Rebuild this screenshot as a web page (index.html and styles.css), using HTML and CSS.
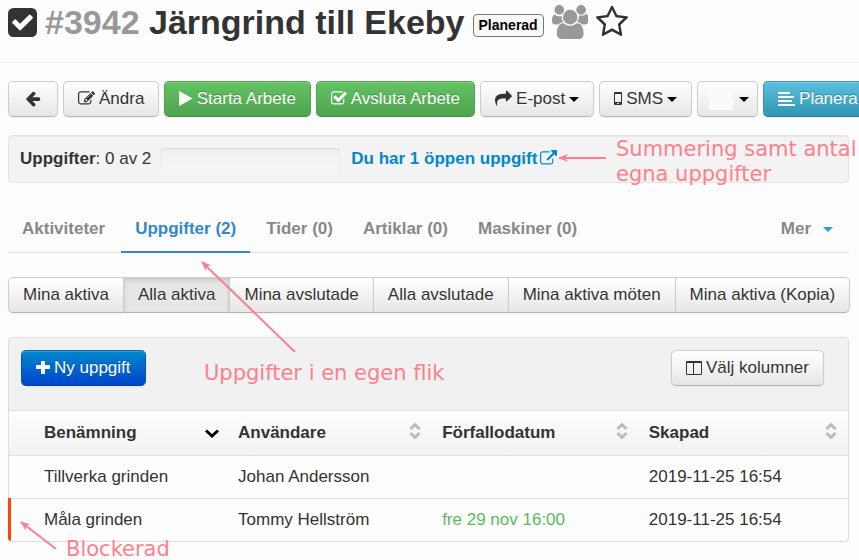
FILE: index.html
```
<!DOCTYPE html>
<html lang="sv">
<head>
    <meta charset="UTF-8">
    <meta name="viewport" content="width=device-width, initial-scale=1.0">
    <title>#3942 Järngrind till Ekeby</title>
    <link rel="stylesheet" href="styles.css">
</head>
<body>
    <header class="page-header">
        <svg class="icon" viewBox="128 128 1536 1536"><path d="M813 1299l614-614q19-19 19-45t-19-45l-102-102q-19-19-45-19t-45 19l-467 467-211-211q-19-19-45-19t-45 19l-102 102q-19 19-19 45t19 45l358 358q19 19 45 19t45-19zm851-883v960q0 119-84.5 203.5t-203.5 84.5h-960q-119 0-203.5-84.5t-84.5-203.5v-960q0-119 84.5-203.5t203.5-84.5h960q119 0 203.5 84.5t84.5 203.5z"/></svg>
        <h1><span class="order-number">#3942</span> Järngrind till Ekeby</h1>
        <span class="label">Planerad</span>
        <svg class="icon icon-users" viewBox="64 0 1920 1792"><path d="M657 896q-162 5-265 128h-134q-82 0-138-40.5t-56-118.5q0-353 124-353 6 0 43.5 21t97.5 42.5 119 21.5q67 0 133-23-5 37-5 66 0 159 93 293zm1071 637q0 120-73 189.5t-194 69.5h-874q-121 0-194-69.5t-73-189.5q0-53 3.5-103.5t14-109 26.5-108.5 43-97.5 62-81 85.5-53.5 111.5-20q10 0 43 21.5t73 48 107 48 135 21.5 135-21.5 107-48 73-48 43-21.5q61 0 111.5 20t85.5 53.5 62 81 43 97.5 26.5 108.5 14 109 3.5 103.5zm-1024-1277q0 106-75 181t-181 75-181-75-75-181 75-181 181-75 181 75 75 181zm704 384q0 159-112.5 271.5t-271.5 112.5-271.5-112.5-112.5-271.5 112.5-271.5 271.5-112.5 271.5 112.5 112.5 271.5zm576 225q0 78-56 118.5t-138 40.5h-134q-103-123-265-128 93-134 93-293 0-29-5-66 66 23 133 23 59 0 119-21.5t97.5-42.5 43.5-21q124 0 124 353zm-128-609q0 106-75 181t-181 75-181-75-75-181 75-181 181-75 181 75 75 181z"/></svg>
        <svg class="icon icon-star" viewBox="64 64 1664 1664"><path d="M1201 1004l306-297-422-62-189-382-189 382-422 62 306 297-73 421 378-199 377 199zm527-357q0 22-26 48l-363 354 86 500q1 7 1 20 0 50-41 50-19 0-40-12l-449-236-449 236q-22 12-40 12-21 0-31.5-14.5t-10.5-35.5q0-6 2-20l86-500-364-354q-25-27-25-48 0-37 56-46l502-73 225-455q19-41 49-41t49 41l225 455 502 73q56 9 56 46z"/></svg>
    </header>

    <main class="content">
        <div class="toolbar">
            <button class="btn btn-back" aria-label="Tillbaka">
                <svg class="icon" viewBox="64 0 1664 1792"><path d="M1664 896v128q0 53-32.5 90.5t-84.5 37.5h-704l293 294q38 36 38 90t-38 90l-75 76q-37 37-90 37-52 0-91-37l-651-652q-37-37-37-90 0-52 37-91l651-650q38-38 91-38 52 0 90 38l75 74q38 38 38 91t-38 91l-293 293h704q52 0 84.5 37.5t32.5 90.5z"/></svg>
            </button>
            <button class="btn">
                <svg class="icon" viewBox="0 0 1792 1792"><path d="M888 1184l116-116-152-152-116 116v56h96v96h56zm440-720q-16-16-33 1l-350 350q-17 17-1 33t33-1l350-350q17-17 1-33zm80 594v190q0 119-84.5 203.5t-203.5 84.5h-832q-119 0-203.5-84.5t-84.5-203.5v-832q0-119 84.5-203.5t203.5-84.5h832q63 0 117 25 15 7 18 23 3 17-9 29l-49 49q-14 14-32 8-23-6-45-6h-832q-66 0-113 47t-47 113v832q0 66 47 113t113 47h832q66 0 113-47t47-113v-126q0-13 9-22l64-64q15-15 35-7t20 29zm-96-738l288 288-672 672h-288v-288zm444 132l-92 92-288-288 92-92q28-28 68-28t68 28l152 152q28 28 28 68t-28 68z"/></svg>
                Ändra
            </button>
            <button class="btn btn-success">
                <svg class="icon" viewBox="192 0 1408 1792"><path d="M1576 927l-1328 738q-23 13-39.5 3t-16.5-36v-1472q0-26 16.5-36t39.5 3l1328 738q23 13 23 31t-23 31z"/></svg>
                Starta Arbete
            </button>
            <button class="btn btn-success">
                <svg class="icon" viewBox="64 0 1664 1792"><path d="M1472 930v318q0 119-84.5 203.5t-203.5 84.5h-832q-119 0-203.5-84.5t-84.5-203.5v-832q0-119 84.5-203.5t203.5-84.5h832q63 0 117 25 15 7 18 23 3 17-9 29l-49 49q-10 10-23 10-3 0-9-2-23-6-45-6h-832q-66 0-113 47t-47 113v832q0 66 47 113t113 47h832q66 0 113-47t47-113v-254q0-13 9-22l64-64q10-10 23-10 6 0 12 3 20 8 20 29zm231-489l-814 814q-24 24-57 24t-57-24l-430-430q-24-24-24-57t24-57l110-110q24-24 57-24t57 24l263 263 647-647q24-24 57-24t57 24l110 110q24 24 24 57t-24 57z"/></svg>
                Avsluta Arbete
            </button>
            <button class="btn" aria-haspopup="menu">
                <svg class="icon" viewBox="0 0 1792 1792"><path d="M1792 640q0 26-19 45l-512 512q-19 19-45 19t-45-19-19-45v-256h-224q-98 0-175.5 6t-154 21.5-133 42.5-105.5 69.5-80 101-48.5 138.5-17.5 181q0 55 5 123 0 6 2.5 23.5t2.5 26.5q0 15-8.5 25t-23.5 10q-16 0-28-17-7-9-13-22t-13.5-30-10.5-24q-127-285-127-451 0-199 53-333 162-403 875-403h224v-256q0-26 19-45t45-19 45 19l512 512q19 19 19 45z"/></svg>
                E-post
                <span class="caret"></span>
            </button>
            <button class="btn" aria-haspopup="menu">
                <svg class="icon" viewBox="0 0 8 17"><path fill-rule="evenodd" d="M1 2h6q1 0 1 1v11q0 1-1 1H1q-1 0-1-1V3q0-1 1-1zm0 2v8h6V4zm2 9v1h2v-1z"/></svg>
                SMS
                <span class="caret"></span>
            </button>
            <button class="btn btn-user" aria-label="Användare" aria-haspopup="menu">
                <span class="avatar"></span>
                <span class="caret"></span>
            </button>
            <button class="btn btn-info">
                <svg class="icon" viewBox="0 0 17 17"><path d="M0 2h12v2H0zM0 6h16v2H0zM0 10h14v2H0zM0 14h17v2H0z"/></svg>
                Planera
            </button>
        </div>

        <section class="summary">
            <label for="task-progress"><strong>Uppgifter</strong>: 0 av 2</label>
            <progress id="task-progress" class="task-progress" value="0" max="2"></progress>
            <a class="open-tasks" href="#uppgifter">Du har 1 öppen uppgift
                <svg class="icon" viewBox="0 0 1792 1792"><path d="M1408 928v320q0 119-84.5 203.5t-203.5 84.5h-832q-119 0-203.5-84.5t-84.5-203.5v-832q0-119 84.5-203.5t203.5-84.5h704q14 0 23 9t9 23v64q0 14-9 23t-23 9h-704q-66 0-113 47t-47 113v832q0 66 47 113t113 47h832q66 0 113-47t47-113v-320q0-14 9-23t23-9h64q14 0 23 9t9 23zm384-864v512q0 26-19 45t-45 19-45-19l-176-176-652 652q-10 10-23 10t-23-10l-114-114q-10-10-10-23t10-23l652-652-176-176q-19-19-19-45t19-45 45-19h512q26 0 45 19t19 45z"/></svg>
            </a>
        </section>

        <nav class="tabs">
            <a href="#aktiviteter">Aktiviteter</a>
            <a href="#uppgifter" class="active">Uppgifter (2)</a>
            <a href="#tider">Tider (0)</a>
            <a href="#artiklar">Artiklar (0)</a>
            <a href="#maskiner">Maskiner (0)</a>
            <a href="#mer" class="more">Mer <span class="caret"></span></a>
        </nav>

        <div class="btn-group">
            <button class="btn">Mina aktiva</button>
            <button class="btn active">Alla aktiva</button>
            <button class="btn">Mina avslutade</button>
            <button class="btn">Alla avslutade</button>
            <button class="btn">Mina aktiva möten</button>
            <button class="btn">Mina aktiva (Kopia)</button>
        </div>

        <section class="panel" id="uppgifter">
            <div class="panel-toolbar">
                <button class="btn btn-primary">
                    <svg class="icon" viewBox="0 0 14 17"><path d="M5 2h4v4h5v4H9v5H5v-5H0V6h5z"/></svg>
                    Ny uppgift
                </button>
                <button class="btn">
                    <svg class="icon" viewBox="0 0 16 17"><path fill-rule="evenodd" d="M1 2h14q1 0 1 1v12q0 1-1 1H1q-1 0-1-1V3q0-1 1-1zm0 2v11h6V4zm7 0v11h7V4z"/></svg>
                    Välj kolumner
                </button>
            </div>
            <table class="task-table">
                <thead>
                    <tr>
                        <th class="col-marker"></th>
                        <th class="col-name"><div class="sort">Benämning <svg class="sort-active" viewBox="0 0 14 9"><path d="M1 1.5l6 5.5 6-5.5"/></svg></div></th>
                        <th class="col-user"><div class="sort">Användare <svg class="sort-icon" viewBox="0 0 12 18"><path d="M1.5 7L6 2.5 10.5 7M1.5 11L6 15.5 10.5 11"/></svg></div></th>
                        <th class="col-due"><div class="sort">Förfallodatum <svg class="sort-icon" viewBox="0 0 12 18"><path d="M1.5 7L6 2.5 10.5 7M1.5 11L6 15.5 10.5 11"/></svg></div></th>
                        <th class="col-created"><div class="sort">Skapad <svg class="sort-icon" viewBox="0 0 12 18"><path d="M1.5 7L6 2.5 10.5 7M1.5 11L6 15.5 10.5 11"/></svg></div></th>
                    </tr>
                </thead>
                <tbody>
                    <tr>
                        <td></td>
                        <td>Tillverka grinden</td>
                        <td>Johan Andersson</td>
                        <td></td>
                        <td>2019-11-25 16:54</td>
                    </tr>
                    <tr class="blocked">
                        <td></td>
                        <td>Måla grinden</td>
                        <td>Tommy Hellström</td>
                        <td class="due">fre 29 nov 16:00</td>
                        <td>2019-11-25 16:54</td>
                    </tr>
                </tbody>
            </table>
        </section>
    </main>

    <!-- Notes drawn on top of the page -->
    <svg class="note-arrows" width="620" height="560">
        <defs>
            <marker id="arrowhead" viewBox="0 0 10 8" refX="9" refY="4" markerWidth="10" markerHeight="8" markerUnits="userSpaceOnUse" orient="auto">
                <path d="M0 0l10 4-10 4 3-4z"/>
            </marker>
        </defs>
        <path d="M606 158H559"/>
        <path d="M295 352L202 262"/>
        <path d="M56 549L21 522"/>
    </svg>
    <p class="note note-summary">Summering samt antal<br>egna uppgifter</p>
    <p class="note note-tab">Uppgifter i en egen flik</p>
    <p class="note note-blocked">Blockerad</p>
</body>
</html>
```
FILE: styles.css
```
* {
    box-sizing: border-box;
}

body {
    position: relative;
    min-height: 100vh;
    margin: 0;
    overflow-x: hidden;
    background-color: #fdfdfd;
    color: #333;
    font-family: "Liberation Sans", Arial, sans-serif;
    font-size: 17px;
    line-height: 24px;
}

.icon {
    height: 17px;
    width: auto;
    flex: none;
    fill: currentColor;
}

/* Header */
.page-header {
    display: flex;
    align-items: center;
    gap: 8px;
    height: 63px;
    padding: 0 8px 18px;
    border-bottom: 1px solid #eee;
}

.page-header .icon {
    height: 29px;
}

.page-header .icon-users {
    height: 34px;
    fill: #999;
}

.page-header .icon-star {
    height: 32px;
}

h1 {
    margin: 0;
    font-size: 34px;
    line-height: 44px;
    white-space: nowrap;
}

.order-number {
    color: #999;
}

.label {
    margin-top: 6px;
    padding: 0 5px;
    border: 1px solid #777;
    border-radius: 4px;
    background-color: #f9f9f9;
    color: #000;
    font-size: 14px;
    font-weight: bold;
    line-height: 21px;
}

.content {
    padding: 18px 10px 0 8px;
}

/* Buttons */
.btn {
    display: inline-flex;
    flex: none;
    align-items: center;
    justify-content: center;
    gap: 4px;
    height: 36px;
    padding: 0 14px;
    border: 1px solid #ccc;
    border-bottom-color: #b3b3b3;
    border-radius: 5px;
    background: linear-gradient(#fff, #e6e6e6);
    box-shadow: inset 0 1px 0 rgba(255, 255, 255, 0.2), 0 1px 2px rgba(0, 0, 0, 0.05);
    color: #333;
    font: inherit;
    text-shadow: 0 1px 1px rgba(255, 255, 255, 0.75);
    white-space: nowrap;
    cursor: pointer;
}

.btn .icon,
.open-tasks .icon {
    margin-bottom: 2px;
}

.btn-success,
.btn-info,
.btn-primary {
    color: #fff;
    text-shadow: 0 -1px 0 rgba(0, 0, 0, 0.25);
}

.btn-success {
    border-color: #51a351 #51a351 #468c46;
    background: linear-gradient(#62c462, #51a351);
}

.btn-info {
    border-color: #2f96b4 #2f96b4 #24748c;
    background: linear-gradient(#5bc0de, #2f96b4);
}

.btn-primary {
    border-color: #0065b3 #0055bb #003caa;
    background: linear-gradient(#08c, #04c);
}

.caret {
    border: 5px solid transparent;
    border-top-color: #000;
    border-bottom: 0;
}

.toolbar {
    display: flex;
    gap: 5px;
}

.btn-back {
    min-width: 50px;
}

.btn-user {
    gap: 6px;
    padding: 0 8px 0 11px;
}

.avatar {
    width: 24px;
    height: 22px;
    background-color: #fafafa;
}

/* Summary */
.summary {
    display: flex;
    align-items: center;
    gap: 9px;
    margin-top: 18px;
    height: 48px;
    padding: 0 11px;
    border: 1px solid #e3e3e3;
    border-radius: 4px;
    background-color: #f3f3f3;
    box-shadow: inset 0 1px 1px rgba(0, 0, 0, 0.05);
}

.task-progress {
    appearance: none;
    width: 180px;
    height: 23px;
    border: 0;
    border-radius: 4px;
    background: linear-gradient(#f0f0f0, #f6f6f6);
    box-shadow: inset 0 1px 2px rgba(0, 0, 0, 0.1);
}

.task-progress::-webkit-progress-bar {
    background: transparent;
}

.open-tasks {
    display: flex;
    align-items: center;
    gap: 3px;
    margin-left: 2px;
    color: #08c;
    font-weight: bold;
    text-decoration: none;
}

/* Tabs */
.tabs {
    display: flex;
    gap: 2px;
    margin-top: 21px;
    border-bottom: 1px solid #ddd;
}

.tabs a {
    margin-bottom: -1px;
    padding: 13px 14px 10px;
    border-bottom: 2px solid transparent;
    color: #888;
    font-weight: bold;
    text-decoration: none;
}

.tabs .active {
    border-bottom-color: #3388cc;
    color: #3388cc;
}

.tabs .more {
    display: flex;
    align-items: center;
    gap: 12px;
    margin-left: auto;
    padding-right: 16px;
}

.more .caret {
    border-top-color: #2a9bdc;
}

/* Filter buttons */
.btn-group {
    display: flex;
    margin-top: 24px;
}

.btn-group .btn {
    border-radius: 0;
}

.btn-group .btn + .btn {
    margin-left: -1px;
}

.btn-group .btn:first-child {
    border-radius: 5px 0 0 5px;
}

.btn-group .btn:last-child {
    border-radius: 0 5px 5px 0;
}

.btn-group .active {
    background: #e6e6e6;
    box-shadow: inset 0 2px 4px rgba(0, 0, 0, 0.15);
}

/* Task table */
.panel {
    margin-top: 24px;
    border: 1px solid #ddd;
    border-left: 0;
    border-radius: 4px;
    overflow: hidden;
}

.panel-toolbar {
    display: flex;
    justify-content: space-between;
    padding: 12px 24px 24px 12px;
    border-left: 1px solid #ddd;
    background-color: #f1f1f1;
}

.task-table {
    width: 100%;
    border-collapse: separate;
    border-spacing: 0;
    table-layout: fixed;
}

.task-table th,
.task-table td {
    height: 43px;
    padding: 0 12px;
    border-top: 1px solid #ddd;
    text-align: left;
}

.task-table th {
    height: 45px;
    padding-right: 9px;
    background: linear-gradient(#fdfdfd, #f2f2f2);
}

.task-table th:first-child,
.task-table td:first-child {
    padding: 0;
    border-left: 1px solid #ddd;
}

.task-table .blocked td:first-child {
    border-top: 0;
    border-left: 3px solid #ff4500;
    box-shadow: inset 0 1px 0 #ddd;
}

.col-marker {
    width: 24px;
}

.col-name {
    width: 23.1%;
}

.col-user {
    width: 24.3%;
}

.col-due {
    width: 24.6%;
}

.task-table .col-name {
    padding-right: 7px;
}

.task-table .col-created {
    padding-right: 11px;
}

.sort {
    display: flex;
    align-items: center;
    justify-content: space-between;
}

.sort svg {
    fill: none;
    stroke: #bbb;
    stroke-width: 3;
}

.sort .sort-active {
    width: 14px;
    height: 9px;
    stroke: #000;
}

.sort-icon {
    width: 12px;
    height: 18px;
    margin-bottom: 4px;
}

.task-table .due {
    color: #5cb85c;
}

/* Notes */
.note,
.note-arrows {
    position: absolute;
    margin: 0;
    pointer-events: none;
}

.note {
    color: #ff808c;
    font-family: "DejaVu Sans", sans-serif;
    font-size: 21px;
    line-height: 25px;
    white-space: nowrap;
}

.note-arrows {
    top: 0;
    left: 0;
    fill: none;
    stroke: #ff808c;
    stroke-width: 2;
}

.note-arrows > path {
    marker-end: url(#arrowhead);
}

.note-arrows marker path {
    fill: #ff808c;
    stroke: none;
}

.note-summary {
    top: 137px;
    left: 616px;
}

.note-tab {
    top: 361px;
    left: 204px;
}

/* Shares the last line of the window with the arrow */
.note-blocked {
    top: 539px;
    left: 66px;
    line-height: 21px;
}
```
